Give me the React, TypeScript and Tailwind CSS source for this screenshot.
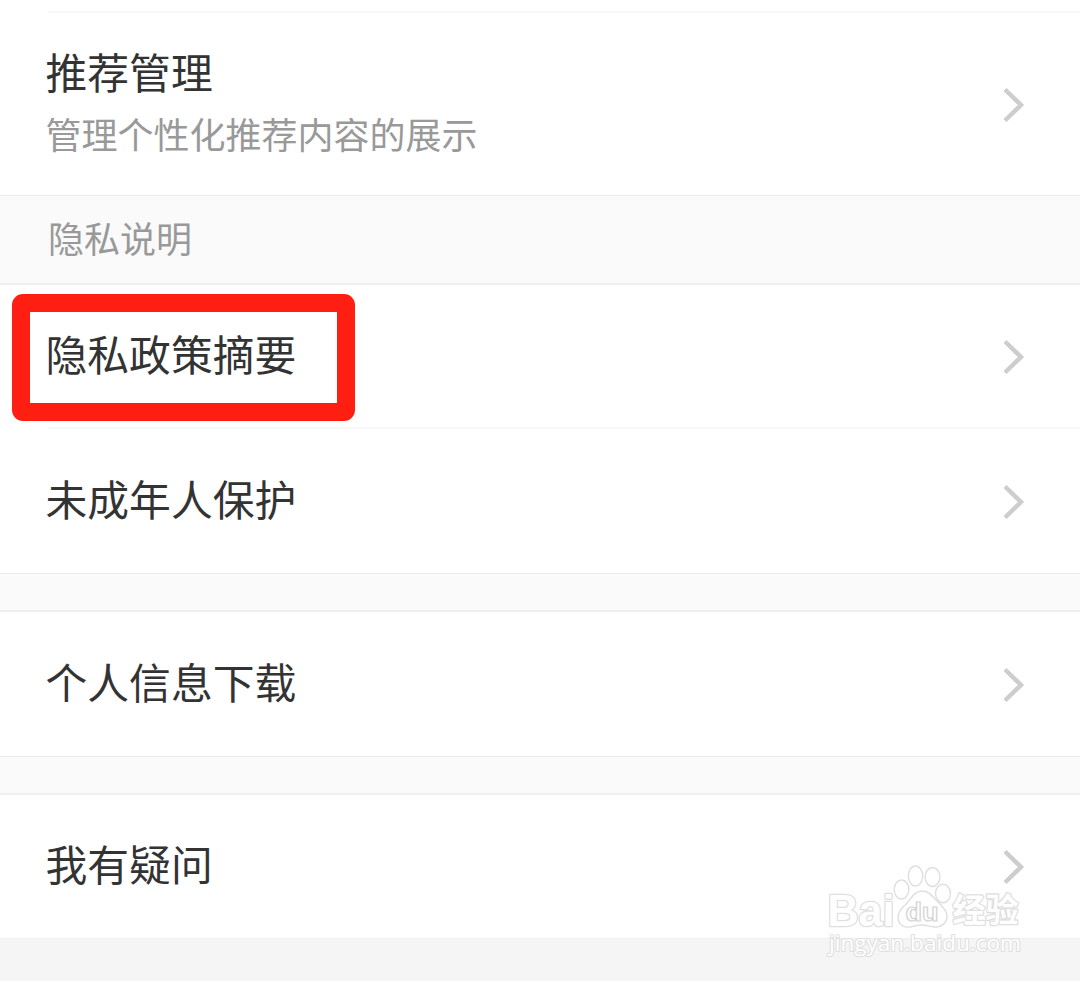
type RowProps = {
  title: string;
  desc?: string;
  height: string;
  highlighted?: boolean;
};

function Chevron() {
  return (
    <svg width="22" height="36" viewBox="0 0 22 36" fill="none" className="shrink-0">
      <path d="M2 2.5 L18 18 L2 33.5" stroke="#cdcdcd" strokeWidth="4.4" />
    </svg>
  );
}

function Row({ title, desc, height, highlighted }: RowProps) {
  return (
    <div className={`relative flex items-center justify-between pl-[45.5px] pr-[55px] ${height}`}>
      <div className={`flex flex-col ${desc ? 'pb-[4px]' : 'pb-[7px]'}`}>
        <span className="text-[41.8px] leading-[62px] text-[#333333]">{title}</span>
        {desc && <span className="text-[36px] leading-[62px] text-[#999999]">{desc}</span>}
      </div>
      <div className="pt-px">
        <Chevron />
      </div>
      {highlighted && (
        <div className="absolute left-[12px] top-[9px] h-[127px] w-[343px] rounded-[11px] border-[18px] border-[#ff1f12]" />
      )}
    </div>
  );
}

function Divider() {
  return <div className="ml-12 h-[2px] bg-[#f7f7f7]" />;
}

function Gap({ label }: { label?: string }) {
  return (
    <div
      className={`flex items-center border-b-2 border-t border-b-[#efefef] border-t-[#ebebeb] bg-[#fafafa] pl-12 ${label ? 'h-[90px]' : 'h-[39px]'}`}
    >
      {label && <span className="pb-[6px] text-[36px] leading-none text-[#999999]">{label}</span>}
    </div>
  );
}

function Watermark() {
  return (
    <svg
      width="220"
      height="120"
      viewBox="0 0 220 120"
      className="absolute left-[820px] top-[855px]"
      fill="#ffffff"
      stroke="#dfdfdf"
      strokeWidth="1.4"
    >
      <g strokeWidth="2.6" paintOrder="stroke" strokeLinejoin="round">
        <text x="7.5" y="71" fontSize="44" fontWeight="700" textLength="67" lengthAdjust="spacingAndGlyphs" fontFamily="Liberation Sans, sans-serif">
          Bai
        </text>
        <text x="132.5" y="67" fontSize="33" fontWeight="700" textLength="66" lengthAdjust="spacingAndGlyphs" fontFamily="Noto Sans CJK SC, sans-serif">
          经验
        </text>
      </g>
      <ellipse cx="81.5" cy="34.5" rx="7.3" ry="9.5" />
      <ellipse cx="95.5" cy="21" rx="7.2" ry="10" />
      <ellipse cx="112.5" cy="22" rx="7.4" ry="9.5" />
      <ellipse cx="123" cy="38.5" rx="7.5" ry="9.2" />
      <path d="M102 36 C95 36 92 42 88 47 C84 51 78 55 78 62 C78 69 83 73 90 72 C95 71 98 70 102 70 C106 70 110 72 115 72 C122 72 127 68 127 61 C127 55 121 50 117 46 C112 41 109 36 102 36 Z" />
      <text x="85.5" y="66" fontSize="25" fontWeight="700" textLength="33" lengthAdjust="spacingAndGlyphs" stroke="#d4d4d4" strokeWidth="1.2" fontFamily="Liberation Sans, sans-serif">
        du
      </text>
      <text x="9" y="96" fontSize="22" textLength="192" lengthAdjust="spacingAndGlyphs" strokeWidth="2.2" paintOrder="stroke" strokeLinejoin="round" fontFamily="Open Sans, sans-serif">
        jingyan.baidu.com
      </text>
    </svg>
  );
}

export default function App() {
  return (
    <div className="relative flex h-[981px] w-[1080px] flex-col overflow-hidden bg-white pt-[11px] font-['Noto_Sans_CJK_SC',sans-serif]">
      <Divider />
      <Row title="推荐管理" desc="管理个性化推荐内容的展示" height="h-[182px]" />
      <Gap label="隐私说明" />
      <Row title="隐私政策摘要" height="h-[142px]" highlighted />
      <Divider />
      <Row title="未成年人保护" height="h-[144px]" />
      <Gap />
      <Row title="个人信息下载" height="h-[144px]" />
      <Gap />
      <Row title="我有疑问" height="h-[143px]" />
      <div className="flex-1 border-t border-[#f0f0f0] bg-[#f5f5f5]" />
      <Watermark />
    </div>
  );
}
